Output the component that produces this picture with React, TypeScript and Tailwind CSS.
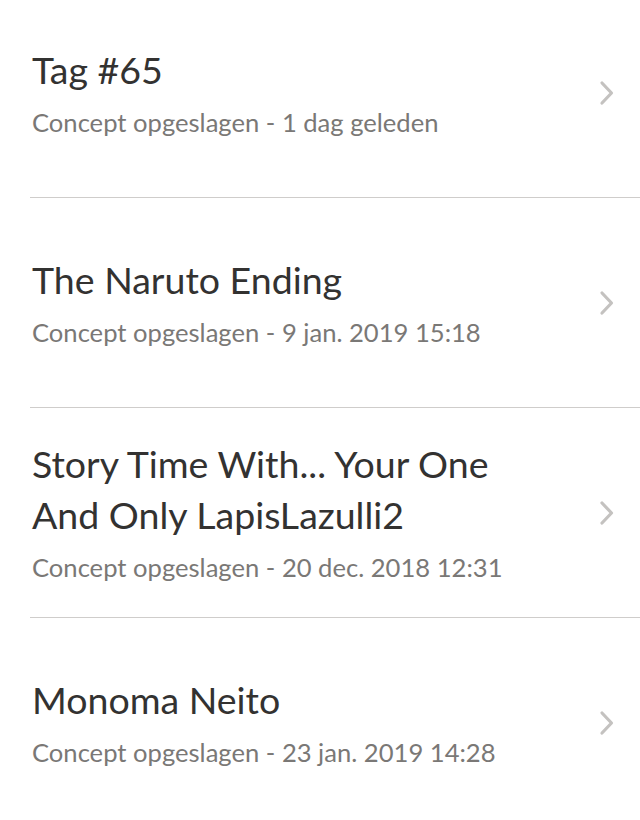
import React from "react";

type Draft = {
  title: string;
  saved: string;
};

const drafts: Draft[] = [
  { title: "Tag #65", saved: "1 dag geleden" },
  { title: "The Naruto Ending", saved: "9 jan. 2019 15:18" },
  { title: "Story Time With... Your One And Only LapisLazulli2", saved: "20 dec. 2018 12:31" },
  { title: "Monoma Neito", saved: "23 jan. 2019 14:28" },
];

const Chevron = () => (
  <svg width="18" height="26" viewBox="0 0 18 26" fill="none" className="shrink-0">
    <path d="M4 3 L13.5 13 L4 23" stroke="#c4c2c0" strokeWidth="3.2" strokeLinecap="round" strokeLinejoin="round" />
  </svg>
);

export default function App() {
  return (
    <div className="w-[640px] h-[820px] overflow-hidden bg-white" style={{ fontFamily: "Lato, 'Noto Sans', sans-serif" }}>
      <div className="mt-[-12px] flex flex-col">
        {drafts.map((d, i) => (
          <div
            key={i}
            className="ml-[30px] h-[210px] flex items-center border-b border-[#cfcdcb] pr-[24px]"
          >
            <div className="flex-1 pl-[2px] pr-[50px] pb-[3px]">
              <div className="text-[37.5px] leading-[51px] text-[#333231]">{d.title}</div>
              <div className="mt-[10px] text-[25.6px] leading-[34px] text-[#7a7876]">
                Concept opgeslagen - {d.saved}
              </div>
            </div>
            <Chevron />
          </div>
        ))}
      </div>
    </div>
  );
}
